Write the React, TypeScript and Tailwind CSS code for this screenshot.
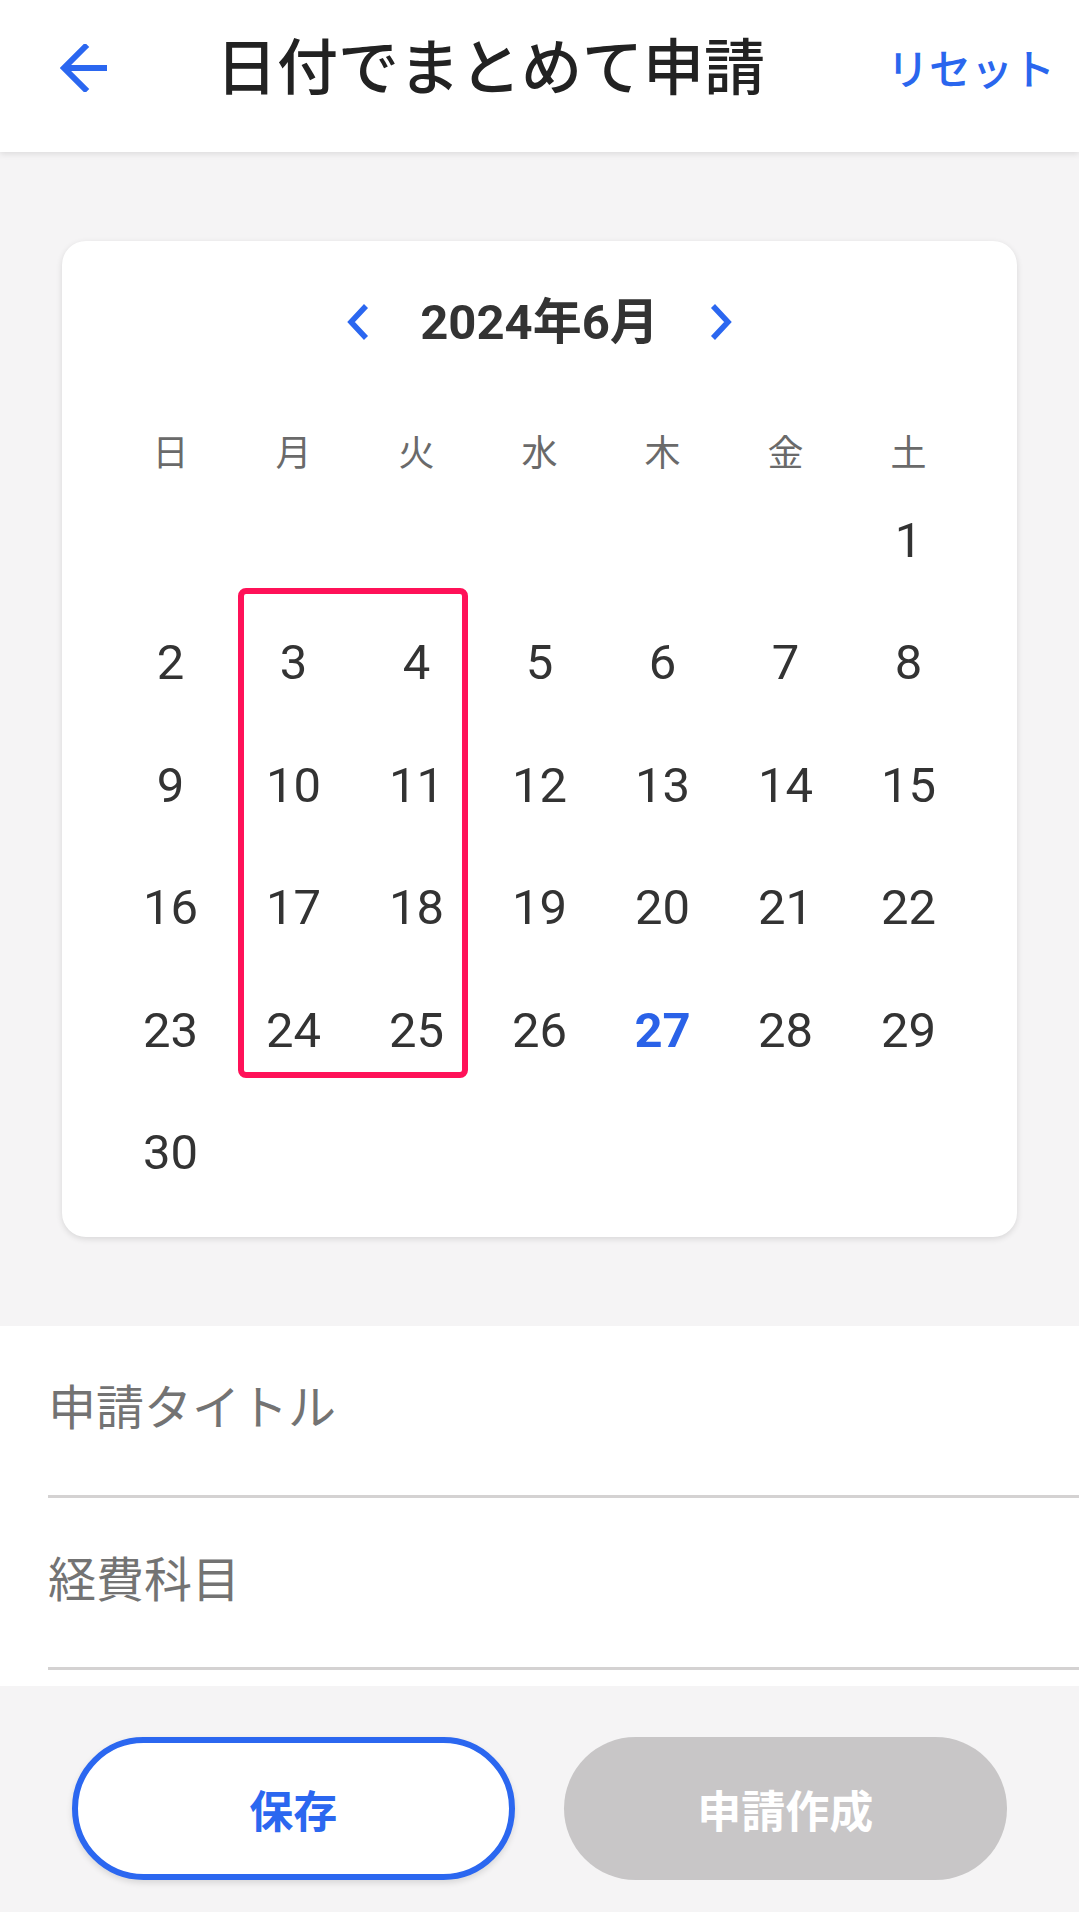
import React from "react";

const jp = "font-['Noto_Sans_CJK_JP','Noto_Sans',sans-serif]";
const num = "font-['Roboto','Noto_Sans_CJK_JP',sans-serif]";

const WEEK = ["日", "月", "火", "水", "木", "金", "土"];

// June 2024 starts on Saturday
const cells: (number | null)[] = [
  ...Array.from({ length: 6 }, () => null),
  ...Array.from({ length: 30 }, (_, i) => i + 1),
];

const TODAY = 27;

const BackArrow = () => (
  <svg width="48" height="48" viewBox="0 0 48 48" fill="none">
    <path d="M47 24H5" stroke="#2b67f0" strokeWidth="6" />
    <path d="M25 3L4 24L25 45" stroke="#2b67f0" strokeWidth="6" strokeLinecap="square" />
  </svg>
);

const Chevron = ({ dir }: { dir: "left" | "right" }) => (
  <svg width="24" height="36" viewBox="0 0 24 36" fill="none">
    <path
      d={dir === "left" ? "M20 2L5 18L20 34" : "M4 2L19 18L4 34"}
      stroke="#2b67f0"
      strokeWidth="5.5"
    />
  </svg>
);

const FormRow = ({ label }: { label: string }) => (
  <div className="ml-[48px] flex h-[172px] items-start border-b-[3px] border-[#d4d2d2] pt-[50px]">
    <span className={`${jp} text-[48px] leading-[56px] text-[#737373]`}>{label}</span>
  </div>
);

export default function App() {
  return (
    <div className="flex h-[1912px] w-[1079px] flex-col overflow-hidden bg-[#f5f4f5]">
      {/* header */}
      <header className="relative z-10 h-[152px] bg-white shadow-[0_2px_6px_rgba(0,0,0,0.10)]">
        <div className="flex h-[136px] items-center">
          <div className="ml-[60px] flex h-[48px] w-[48px] items-center justify-center">
            <BackArrow />
          </div>
          <h1 className={`${jp} mb-[10px] ml-[108px] text-[61px] font-medium leading-none text-[#222222]`}>
            日付でまとめて申請
          </h1>
          <button className={`${jp} mb-[4px] ml-auto mr-[24px] text-[42px] font-medium text-[#2a66ee]`}>
            リセット
          </button>
        </div>
      </header>

      {/* calendar */}
      <div className="px-[62px] pb-[89px] pt-[89px]">
        <div className="rounded-[24px] bg-white px-[47px] pb-[23px] pt-[55px] shadow-[0_2px_6px_rgba(0,0,0,0.12)]">
          <div className="flex h-[52px] items-center justify-center">
            <Chevron dir="left" />
            <span className={`${num} mx-[50px] text-[49px] font-bold leading-none text-[#333333]`}>
              2024年6月
            </span>
            <Chevron dir="right" />
          </div>

          <div className="mt-[73px] grid h-[58px] grid-cols-7 items-center">
            {WEEK.map((w) => (
              <div key={w} className={`${jp} text-center text-[36px] leading-none text-[#6a6a6a]`}>
                {w}
              </div>
            ))}
          </div>

          <div className="relative grid grid-cols-7 auto-rows-[122.5px]">
            {cells.map((d, i) => (
              <div key={i} className="flex items-center justify-center">
                {d !== null && (
                  <span
                    className={`${num} text-[49px] leading-none ${
                      d === TODAY ? "font-bold text-[#2a62e8]" : "text-[#333333]"
                    }`}
                  >
                    {d}
                  </span>
                )}
              </div>
            ))}
            {/* selected range (Mon/Tue columns, weeks 2-5) */}
            <div className="pointer-events-none absolute left-[129px] top-[109px] h-[490px] w-[230px] rounded-[8px] border-[6px] border-[#ff1158]" />
          </div>
        </div>
      </div>

      {/* form */}
      <div className="bg-white pb-[16px]">
        <FormRow label="申請タイトル" />
        <FormRow label="経費科目" />
      </div>

      {/* actions */}
      <div className="flex gap-[49px] px-[72px] pt-[51px]">
        <button
          className={`${jp} flex h-[143px] w-[443px] items-center justify-center rounded-full border-[6px] border-[#2b67f0] bg-white text-[44px] font-bold text-[#2b67f0] shadow-[0_3px_6px_rgba(0,0,0,0.12)]`}
        >
          保存
        </button>
        <button
          className={`${jp} flex h-[143px] w-[444px] items-center justify-center rounded-full bg-[#c8c6c7] text-[44px] font-bold text-white`}
        >
          申請作成
        </button>
      </div>
    </div>
  );
}
